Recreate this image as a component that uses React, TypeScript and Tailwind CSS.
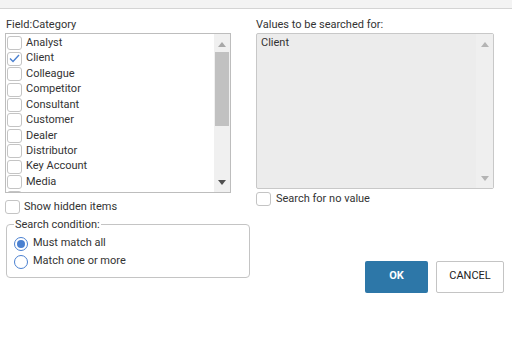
import { useState } from "react";

const categories = [
  "Analyst",
  "Client",
  "Colleague",
  "Competitor",
  "Consultant",
  "Customer",
  "Dealer",
  "Distributor",
  "Key Account",
  "Media",
  "Other",
];

function Box({ checked, onClick }: { checked?: boolean; onClick?: () => void }) {
  return (
    <span
      onClick={onClick}
      className="flex h-[14px] w-[15px] shrink-0 items-center justify-center rounded-[3px] border border-[#c4c4c4] bg-white"
    >
      {checked && (
        <svg width="11" height="9" viewBox="0 0 11 9">
          <path d="M1 4.5 L4 7.5 L10 1" fill="none" stroke="#4a80d0" strokeWidth="1.4" />
        </svg>
      )}
    </span>
  );
}

function Radio({ on }: { on?: boolean }) {
  return (
    <span className="flex h-[14px] w-[14px] items-center justify-center rounded-full border border-[#4a80d0] bg-white">
      {on && <span className="h-[8px] w-[8px] rounded-full bg-[#4a80d0]" />}
    </span>
  );
}

function Arrow({ up, color }: { up?: boolean; color: string }) {
  return (
    <svg width="8" height="5" viewBox="0 0 8 5">
      <path d={up ? "M0 5 L4 0 L8 5 Z" : "M0 0 L8 0 L4 5 Z"} fill={color} />
    </svg>
  );
}

export default function App() {
  const [picked, setPicked] = useState<string[]>(["Client"]);
  const [mode, setMode] = useState("all");

  const toggle = (c: string) =>
    setPicked((p) => (p.includes(c) ? p.filter((x) => x !== c) : [...p, c]));

  return (
    <div
      className="h-[346px] w-[512px] bg-white text-[11px] text-[#333]"
      style={{ fontFamily: "Roboto, 'Liberation Sans', sans-serif" }}
    >
      <div className="h-[9px] border-b border-[#d4d4d4] bg-[#f3f3f3]" />

      <div className="flex pl-[5px] pt-[8px]">
        {/* left column */}
        <div className="w-[245px]">
          <div className="pl-[1px] leading-[16px]">Field:Category</div>
          <div className="flex h-[160px] w-[226px] overflow-hidden border border-[#bdbdbd]">
            <div className="flex-1 overflow-hidden pl-[1px] pt-[1.5px]">
              {categories.map((c) => (
                <div key={c} className="flex h-[15.45px] items-center gap-[4px]" onClick={() => toggle(c)}>
                  <Box checked={picked.includes(c)} />
                  <span>{c}</span>
                </div>
              ))}
            </div>
            <div className="flex w-[16px] flex-col items-center bg-[#f0f0f0]">
              <div className="flex h-[18px] items-center pt-[3px]">
                <Arrow up color="#a8a8a8" />
              </div>
              <div className="h-[74px] w-[14px] bg-[#c1c1c1]" />
              <div className="flex-1" />
              <div className="flex h-[16px] items-center pb-[4px]">
                <Arrow color="#505050" />
              </div>
            </div>
          </div>

          <div className="mt-[6px] flex items-center gap-[4px]">
            <Box />
            <span>Show hidden items</span>
          </div>

          <fieldset className="mt-[3px] ml-[1px] h-[59px] rounded-[4px] border border-[#c4c4c4] px-[7px] pb-[2px]">
            <legend className="px-[1px] leading-[12px]">Search condition:</legend>
            <div className="mt-[6px] flex flex-col gap-[4px]">
              <label className="flex h-[14px] items-center gap-[5px]" onClick={() => setMode("all")}>
                <Radio on={mode === "all"} />
                <span>Must match all</span>
              </label>
              <label className="flex h-[14px] items-center gap-[5px]" onClick={() => setMode("any")}>
                <Radio on={mode === "any"} />
                <span>Match one or more</span>
              </label>
            </div>
          </fieldset>
        </div>

        {/* right column */}
        <div className="ml-[6px] flex w-[248px] flex-col">
          <div className="leading-[16px]">Values to be searched for:</div>
          <div className="flex h-[156px] w-[238px] rounded-[2px] border border-[#c8c8c8] bg-[#ececec]">
            <div className="flex-1 pl-[4px] pt-[1px] leading-[15px]">
              {picked.map((p) => (
                <div key={p}>{p}</div>
              ))}
            </div>
            <div className="flex w-[17px] flex-col items-center bg-[#efefef]">
              <div className="flex h-[18px] items-center pt-[3px]">
                <Arrow up color="#b4b4b4" />
              </div>
              <div className="flex-1" />
              <div className="flex h-[16px] items-center pb-[4px]">
                <Arrow color="#b4b4b4" />
              </div>
            </div>
          </div>

          <div className="mt-[2px] flex items-center gap-[5px]">
            <Box />
            <span>Search for no value</span>
          </div>

          <div className="mt-[53px] flex justify-end gap-[8px]">
            <button className="h-[32px] w-[63px] rounded-[2px] bg-[#2d77a8] text-[11px] font-bold text-white">
              OK
            </button>
            <button className="h-[32px] w-[68px] rounded-[2px] border border-[#c4c4c4] bg-white text-[11px] text-[#222]">
              CANCEL
            </button>
          </div>
        </div>
      </div>
    </div>
  );
}
